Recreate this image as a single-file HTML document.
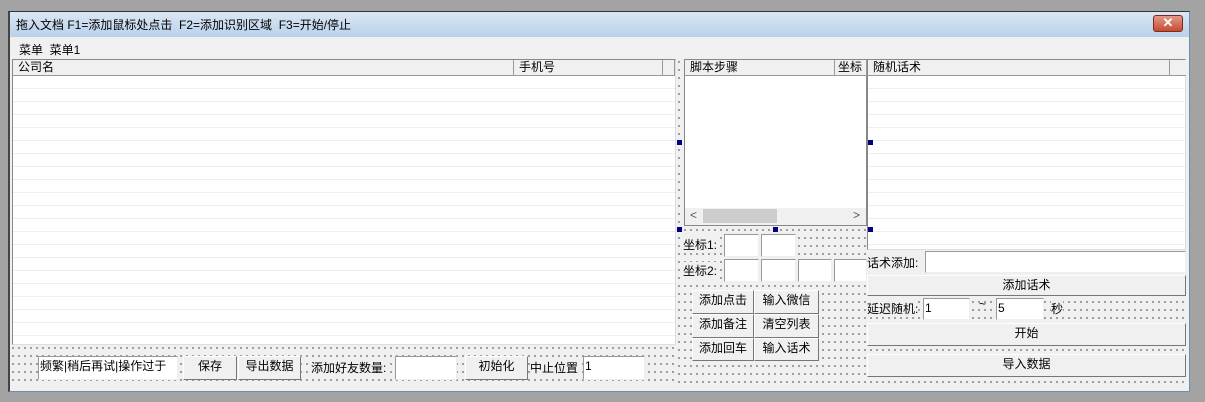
<!DOCTYPE html><html><head><meta charset="utf-8"><style>
*{box-sizing:border-box;margin:0;padding:0}
body{width:1205px;height:402px;background:#a3a3a3;position:relative;overflow:hidden;font:12px "Liberation Sans","Noto Sans CJK SC",sans-serif;color:#000}
.a{position:absolute}
.win{left:8px;top:11px;width:1182px;height:381px;background:#f0f0f0;border:1px solid #6a8fb5;border-top:1px solid #333;border-left:2px solid #444}
.title{left:10px;top:12px;width:1179px;height:25px;background:linear-gradient(#dbe7f4,#b9d1ea);padding:4px 0 0 6px}
.close{left:1153px;top:15px;width:30px;height:17px;background:linear-gradient(#e39a87,#c74a33);border:1px solid #7a2a1e;border-radius:3px;color:#fff;font-weight:bold;text-align:center;line-height:14px;font-size:13px}
.dots{background-color:#f0f0f0;background-image:radial-gradient(#666 0.6px,transparent 0.9px);background-size:6px 8px}
.list{background:#fff;border:1px solid #888;border-right-color:#ddd;border-bottom-color:#ddd;background-image:repeating-linear-gradient(#fff 0 12px,#eee 12px 13px)}
.hdr{position:absolute;top:0;height:16px;background:#f0f0f0;border-right:1px solid #999;border-bottom:1px solid #999;padding-left:5px;line-height:15px}
.in{position:absolute;background:#fff;border:1px solid #999;border-right-color:#eee;border-bottom-color:#eee;padding-left:1px;line-height:19px}
.btn{position:absolute;background:#f0f0f0;border:1px solid #fff;border-right-color:#777;border-bottom-color:#777;text-align:center;line-height:19px}
.h{position:absolute;width:5px;height:5px;background:#000080}
</style></head><body>
<div class="a win"></div>
<div class="a title">拖入文档 F1=添加鼠标处点击&nbsp; F2=添加识别区域&nbsp; F3=开始/停止</div>
<div class="a close">✕</div>
<div class="a" style="left:19px;top:41px">菜单&nbsp;&nbsp;菜单1</div>
<div class="a dots" style="left:676px;top:58px;width:510px;height:329px"></div>
<div class="a dots" style="left:10px;top:344px;width:667px;height:43px"></div>
<div class="a list" style="left:12px;top:59px;width:664px;height:286px;background-position:0 3px">
<div class="hdr" style="left:0;width:501px">公司名</div>
<div class="hdr" style="left:501px;width:149px">手机号</div>
<div class="hdr" style="left:650px;width:12px"></div>
</div>
<div class="a" style="left:684px;top:59px;width:183px;height:167px;background:#fff;border:1px solid #888">
<div class="hdr" style="left:0;width:150px">脚本步骤</div>
<div class="hdr" style="left:150px;width:32px;padding-left:3px">坐标</div>
<div class="a" style="left:0;top:148px;width:181px;height:17px;background:#f0f0f0"><div class="a" style="left:18px;top:1px;width:74px;height:14px;background:#cdcdcd"></div><span class="a" style="left:5px;top:0;color:#555">&lt;</span><span class="a" style="left:168px;top:0;color:#555">&gt;</span></div>
</div>
<div class="a list" style="left:867px;top:59px;width:319px;height:191px;background-position:0 3px">
<div class="hdr" style="left:0;width:302px">随机话术</div>
<div class="hdr" style="left:302px;width:16px;border-right:none"></div>
</div>
<div class="h" style="left:677px;top:140px"></div><div class="h" style="left:868px;top:140px"></div>
<div class="h" style="left:677px;top:227px"></div><div class="h" style="left:773px;top:227px"></div><div class="h" style="left:868px;top:227px"></div>
<div class="a" style="left:683px;top:236px;background:#f0f0f0">坐标1:</div>
<div class="in" style="left:724px;top:234px;width:35px;height:23px"></div>
<div class="in" style="left:761px;top:234px;width:35px;height:23px"></div>
<div class="a" style="left:683px;top:262px;background:#f0f0f0">坐标2:</div>
<div class="in" style="left:724px;top:259px;width:35px;height:23px"></div>
<div class="in" style="left:761px;top:259px;width:35px;height:23px"></div>
<div class="in" style="left:798px;top:259px;width:34px;height:23px"></div>
<div class="in" style="left:834px;top:259px;width:33px;height:23px"></div>
<div class="btn" style="left:692px;top:290px;width:62px;height:24px">添加点击</div>
<div class="btn" style="left:754px;top:290px;width:65px;height:24px">输入微信</div>
<div class="btn" style="left:692px;top:314px;width:62px;height:24px">添加备注</div>
<div class="btn" style="left:754px;top:314px;width:65px;height:24px">清空列表</div>
<div class="btn" style="left:692px;top:338px;width:62px;height:23px">添加回车</div>
<div class="btn" style="left:754px;top:338px;width:65px;height:23px">输入话术</div>
<div class="a" style="left:867px;top:253px;width:58px;height:18px;background:#f0f0f0;padding-top:1px">话术添加:</div>
<div class="in" style="left:925px;top:251px;width:261px;height:22px"></div>
<div class="btn" style="left:867px;top:275px;width:319px;height:21px;line-height:18px">添加话术</div>
<div class="a" style="left:867px;top:300px;background:#f0f0f0">延迟随机:</div>
<div class="in" style="left:923px;top:298px;width:47px;height:22px">1</div>
<div class="a" style="left:979px;top:297px">~</div>
<div class="in" style="left:996px;top:298px;width:48px;height:22px">5</div>
<div class="a" style="left:1051px;top:300px;background:#f0f0f0">秒</div>
<div class="btn" style="left:867px;top:323px;width:319px;height:23px">开始</div>
<div class="btn" style="left:867px;top:354px;width:319px;height:23px">导入数据</div>
<div class="in" style="left:38px;top:356px;width:140px;height:24px;white-space:nowrap;overflow:hidden">频繁|稍后再试|操作过于</div>
<div class="btn" style="left:183px;top:356px;width:54px;height:24px">保存</div>
<div class="btn" style="left:238px;top:356px;width:63px;height:24px">导出数据</div>
<div class="a" style="left:311px;top:359px;background:#f0f0f0">添加好友数量:</div>
<div class="in" style="left:395px;top:356px;width:62px;height:24px"></div>
<div class="btn" style="left:465px;top:356px;width:63px;height:24px">初始化</div>
<div class="a" style="left:530px;top:359px;background:#f0f0f0">中止位置</div>
<div class="in" style="left:583px;top:356px;width:62px;height:24px">1</div>
</body></html>
